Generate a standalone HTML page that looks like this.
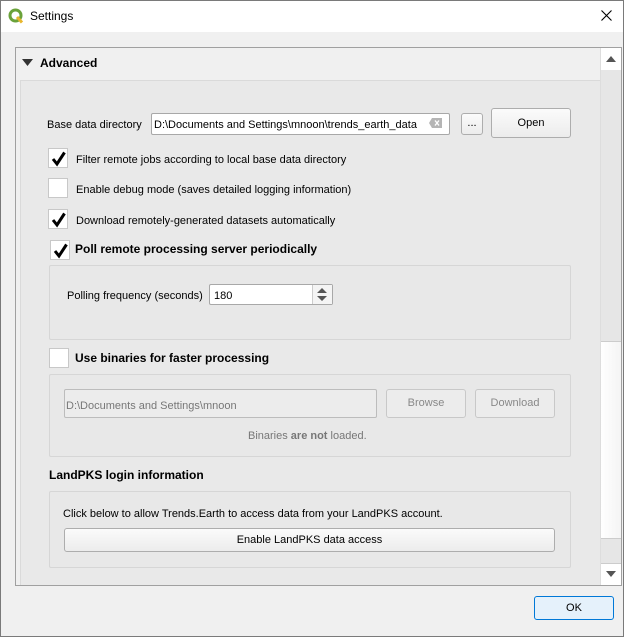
<!DOCTYPE html>
<html><head><meta charset="utf-8"><style>
*{box-sizing:border-box;margin:0;padding:0}
body{width:624px;height:637px;overflow:hidden;background:#f0f0f0;font-family:"Liberation Sans",sans-serif;font-size:11px;color:#000;position:relative}
.a{position:absolute}
.win{left:0;top:0;width:624px;height:637px;border:1px solid #7a7a7a}
.title{left:1px;top:1px;width:622px;height:31px;background:#fff}
.t{white-space:nowrap;line-height:14px}
.b{font-weight:bold;font-size:12px}
.cb{position:absolute;width:20px;height:20px;background:#fff;border:1px solid #c8c8c8}
.cb svg{position:absolute;left:1px;top:1px}
.grp{position:absolute;border:1px solid #d6d6d6;border-radius:2px;background:#e8e8e8}
.btn{position:absolute;border:1px solid #adadad;border-radius:3px;background:linear-gradient(#fbfbfb,#ececec);text-align:center;white-space:nowrap}
.inp{position:absolute;background:#fff;border:1px solid #a8a8a8;border-radius:2px}
</style></head><body>
<div class="a win"></div>
<div class="a title"></div>
<svg class="a" style="left:8px;top:8px" width="16" height="16" viewBox="0 0 16 16"><circle cx="7.5" cy="7.5" r="5.5" fill="none" stroke="#6aa23a" stroke-width="3"/><path d="M9 9 L14 14.5" stroke="#e8b62c" stroke-width="3"/></svg>
<div class="a t" style="left:30px;top:9px;font-size:12px">Settings</div>
<svg class="a" style="left:601px;top:10px" width="11" height="11"><path d="M0.5 0.5L10.5 10.5M10.5 0.5L0.5 10.5" stroke="#000" stroke-width="1.1"/></svg>

<div class="a" style="left:15px;top:47px;width:607px;height:539px;border:1px solid #a0a0a0;background:#f0f0f0;overflow:hidden">
  <div class="a" style="left:4px;top:32px;width:581px;height:520px;background:#e9e9e9;border:1px solid #dadada"></div>
</div>
<svg class="a" style="left:22px;top:59px" width="11" height="8"><path d="M0 0H11L5.5 7Z" fill="#333"/></svg>
<div class="a t b" style="left:40px;top:56px">Advanced</div>

<div class="a t" style="left:47px;top:118px">Base data directory</div>
<div class="inp" style="left:151px;top:113px;width:299px;height:22px"></div>
<div class="a t" style="left:154px;top:118px">D:\Documents and Settings\mnoon\trends_earth_data</div>
<svg class="a" style="left:429px;top:118px" width="13" height="10"><path d="M3 0H13V10H3L0 5Z" fill="#b5b5b5"/><path d="M6 2.5L10 7.5M10 2.5L6 7.5" stroke="#fff" stroke-width="1.4"/></svg>
<div class="btn" style="left:461px;top:113px;width:22px;height:22px;line-height:18px">...</div>
<div class="btn" style="left:491px;top:108px;width:80px;height:30px;line-height:28px">Open</div>

<div class="cb" style="left:48px;top:148px"><svg width="18" height="18"><path d="M3 9L7 14L14.5 2.5" fill="none" stroke="#000" stroke-width="3"/></svg></div>
<div class="a t" style="left:76px;top:153px">Filter remote jobs according to local base data directory</div>
<div class="cb" style="left:48px;top:178px"></div>
<div class="a t" style="left:76px;top:183px">Enable debug mode (saves detailed logging information)</div>
<div class="cb" style="left:48px;top:209px"><svg width="18" height="18"><path d="M3 9L7 14L14.5 2.5" fill="none" stroke="#000" stroke-width="3"/></svg></div>
<div class="a t" style="left:76px;top:214px">Download remotely-generated datasets automatically</div>
<div class="cb" style="left:50px;top:240px"><svg width="18" height="18"><path d="M3 9L7 14L14.5 2.5" fill="none" stroke="#000" stroke-width="3"/></svg></div>
<div class="a t b" style="left:75px;top:242px">Poll remote processing server periodically</div>

<div class="grp" style="left:49px;top:265px;width:522px;height:75px"></div>
<div class="a t" style="left:67px;top:289px">Polling frequency (seconds)</div>
<div class="inp" style="left:209px;top:284px;width:124px;height:21px"></div>
<div class="a t" style="left:214px;top:289px">180</div>
<div class="a" style="left:312px;top:285px;width:20px;height:19px;border-left:1px solid #ccc;background:#f4f4f4"></div>
<svg class="a" style="left:317px;top:288px" width="10" height="13"><path d="M0 5L5 0L10 5Z M0 8L5 13L10 8Z" fill="#555"/></svg>

<div class="cb" style="left:49px;top:348px"></div>
<div class="a t b" style="left:75px;top:351px">Use binaries for faster processing</div>
<div class="grp" style="left:49px;top:374px;width:522px;height:83px"></div>
<div class="a" style="left:64px;top:389px;width:313px;height:29px;border:1px solid #bcbcbc;border-radius:2px;background:#ececec"></div>
<div class="a t" style="left:66px;top:399px;color:#777">D:\Documents and Settings\mnoon</div>
<div class="btn" style="left:386px;top:389px;width:80px;height:29px;line-height:27px;color:#888;background:#ececec;border-color:#c8c8c8">Browse</div>
<div class="btn" style="left:475px;top:389px;width:80px;height:29px;line-height:27px;color:#888;background:#ececec;border-color:#c8c8c8">Download</div>
<div class="a t" style="left:248px;top:429px;color:#777">Binaries <b>are not</b> loaded.</div>

<div class="a t b" style="left:49px;top:468px">LandPKS login information</div>
<div class="grp" style="left:49px;top:491px;width:522px;height:77px"></div>
<div class="a t" style="left:63px;top:507px">Click below to allow Trends.Earth to access data from your LandPKS account.</div>
<div class="btn" style="left:64px;top:528px;width:491px;height:24px;line-height:22px">Enable LandPKS data access</div>

<div class="a" style="left:600px;top:48px;width:21px;height:537px;background:#e6e6e6;border-left:1px solid #ddd"></div>
<div class="a" style="left:601px;top:48px;width:20px;height:22px;background:#fff"></div>
<svg class="a" style="left:606px;top:56px" width="10" height="6"><path d="M0 6L5 0L10 6Z" fill="#555"/></svg>
<div class="a" style="left:601px;top:341px;width:20px;height:198px;background:linear-gradient(90deg,#fff,#f4f4f4);border-top:1px solid #ccc;border-bottom:1px solid #ccc"></div>
<div class="a" style="left:601px;top:563px;width:20px;height:22px;background:#fff;border-top:1px solid #ccc"></div>
<svg class="a" style="left:606px;top:571px" width="10" height="6"><path d="M0 0L5 6L10 0Z" fill="#555"/></svg>

<div class="btn" style="left:534px;top:596px;width:80px;height:24px;line-height:22px;border-color:#0078d7;background:#e5f1fb">OK</div>
</body></html>
